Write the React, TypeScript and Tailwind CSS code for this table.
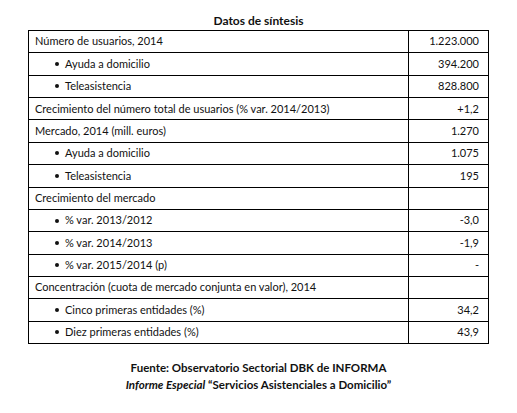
const rows: { label: string; value: string; bullet?: boolean }[] = [
  { label: 'Número de usuarios, 2014', value: '1.223.000' },
  { label: 'Ayuda a domicilio', value: '394.200', bullet: true },
  { label: 'Teleasistencia', value: '828.800', bullet: true },
  { label: 'Crecimiento del número total de usuarios (% var. 2014/2013)', value: '+1,2' },
  { label: 'Mercado, 2014 (mill. euros)', value: '1.270' },
  { label: 'Ayuda a domicilio', value: '1.075', bullet: true },
  { label: 'Teleasistencia', value: '195', bullet: true },
  { label: 'Crecimiento del mercado', value: '' },
  { label: '% var. 2013/2012', value: '-3,0', bullet: true },
  { label: '% var. 2014/2013', value: '-1,9', bullet: true },
  { label: '% var. 2015/2014 (p)', value: '-', bullet: true },
  { label: 'Concentración (cuota de mercado conjunta en valor), 2014', value: '' },
  { label: 'Cinco primeras entidades (%)', value: '34,2', bullet: true },
  { label: 'Diez primeras entidades (%)', value: '43,9', bullet: true },
];

export default function App() {
  return (
    <div className="w-[517px] h-[413px] bg-white text-[#111] font-['Lato','Liberation_Sans',sans-serif] pt-[12px]">
      <div className="text-center font-bold text-[12px] leading-[18px]">Datos de síntesis</div>
      <div className="w-[461px] mx-auto border-t border-l border-r border-black">
        {rows.map((r, i) => (
          <div key={i} className="flex h-[22.36px] border-b border-black text-[11px]">
            <div className="flex-1 flex items-center pl-[6px]">
              {r.bullet && <span className="ml-[20px] mr-[6px] w-[4px] h-[4px] rounded-full bg-[#111]" />}
              <span>{r.label}</span>
            </div>
            <div className="w-[80px] border-l border-black flex items-center justify-end pr-[9px]">{r.value}</div>
          </div>
        ))}
      </div>
      <div className="mt-[15px] text-center text-[11.5px] leading-[17px] font-bold">
        <div>Fuente: Observatorio Sectorial DBK de INFORMA</div>
        <div>
          <i>Informe Especial</i> “Servicios Asistenciales a Domicilio”
        </div>
      </div>
    </div>
  );
}
